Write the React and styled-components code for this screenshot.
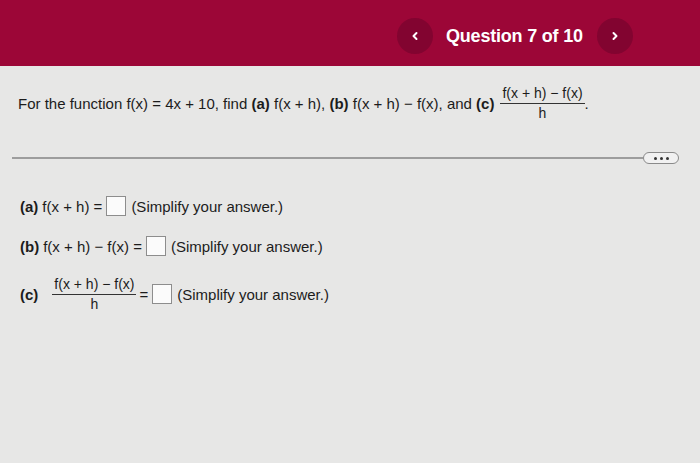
import React from "react";
import styled, { createGlobalStyle } from "styled-components";

const Global = createGlobalStyle`
  html, body { margin: 0; padding: 0; }
  body {
    background: #e7e7e6;
    font-family: "Liberation Sans", Arial, sans-serif;
    color: #1c1c1c;
    width: 700px;
    height: 463px;
    overflow: hidden;
  }
`;

const Header = styled.header`
  height: 66px;
  background: #9c0637;
  display: flex;
  align-items: center;
  padding: 6px 0 0 397px;
  box-sizing: border-box;
`;

const NavButton = styled.button`
  width: 36px;
  height: 36px;
  border-radius: 50%;
  border: none;
  background: #820430;
  color: #fff;
  display: flex;
  align-items: center;
  justify-content: center;
  padding: 0;
  flex: none;
`;

const HeaderTitle = styled.div`
  color: #fff;
  font-weight: bold;
  font-size: 18px;
  letter-spacing: -0.2px;
  margin: 0 14px 0 13px;
`;

const Statement = styled.div`
  padding: 17px 0 0 18px;
  font-size: 15px;
  height: 40px;
  display: flex;
  align-items: center;
  white-space: nowrap;
`;

const Fraction = styled.span`
  display: inline-flex;
  flex-direction: column;
  align-items: center;
  font-size: 14px;
  margin: 0 ${(p) => p.$gap}px 0 ${(p) => p.$lead}px;
`;

const Num = styled.span`
  padding: 0 2px 2px;
  border-bottom: 1px solid #333;
`;

const Den = styled.span`
  padding-top: 1px;
`;

const Bold = styled.b`
  font-weight: bold;
`;

const DividerRow = styled.div`
  display: flex;
  align-items: center;
  margin-top: 29px;
  padding-left: 12px;
`;

const Line = styled.div`
  flex: 1;
  height: 2px;
  background: #9d9d9d;
`;

const Pill = styled.div`
  width: 34px;
  height: 10px;
  border: 1.5px solid #8a8a8a;
  border-radius: 7px;
  background: #f1f1f1;
  display: flex;
  align-items: center;
  justify-content: center;
  gap: 3px;
  margin-right: 21px;
`;

const Dot = styled.span`
  width: 3px;
  height: 3px;
  border-radius: 50%;
  background: #333;
`;

const Parts = styled.div`
  padding: 29px 0 0 20px;
  display: flex;
  flex-direction: column;
  font-size: 15px;
`;

const PartRow = styled.div`
  display: flex;
  align-items: center;
  height: 26px;
  margin-bottom: ${(p) => p.$mb}px;
  white-space: nowrap;
`;

const Box = styled.span`
  display: inline-block;
  width: 18px;
  height: 18px;
  border: 1px solid #8d8d8d;
  background: #fbfbfb;
  margin: 0 5px 0 4px;
`;

const Label = styled.b`
  margin-right: ${(p) => p.$mr || 4}px;
`;

const Chevron = ({ dir }) => (
  <svg width="10" height="10" viewBox="0 0 10 10">
    <path
      d={dir === "left" ? "M6.5 2 L3.5 5 L6.5 8" : "M3.5 2 L6.5 5 L3.5 8"}
      fill="none"
      stroke="#fff"
      strokeWidth="2"
      strokeLinecap="round"
      strokeLinejoin="round"
    />
  </svg>
);

const Frac = ({ lead, gap }) => (
  <Fraction $lead={lead} $gap={gap}>
    <Num>f(x + h) − f(x)</Num>
    <Den>h</Den>
  </Fraction>
);

export default function App() {
  return (
    <>
      <Global />
      <Header>
        <NavButton aria-label="previous">
          <Chevron dir="left" />
        </NavButton>
        <HeaderTitle>Question 7 of 10</HeaderTitle>
        <NavButton aria-label="next">
          <Chevron dir="right" />
        </NavButton>
      </Header>
      <Statement>
        For the function f(x) = 4x + 10, find&nbsp;<Bold>(a)</Bold>&nbsp;f(x + h),&nbsp;
        <Bold>(b)</Bold>&nbsp;f(x + h) − f(x), and&nbsp;<Bold>(c)</Bold>
        <Frac lead={6} gap={0} />.
      </Statement>
      <DividerRow>
        <Line />
        <Pill>
          <Dot />
          <Dot />
          <Dot />
        </Pill>
      </DividerRow>
      <Parts>
        <PartRow $mb={14}>
          <Label>(a)</Label>f(x + h) =<Box />(Simplify your answer.)
        </PartRow>
        <PartRow $mb={22}>
          <Label>(b)</Label>f(x + h) − f(x) =<Box />(Simplify your answer.)
        </PartRow>
        <PartRow $mb={0}>
          <Label $mr={8}>(c)</Label>
          <Frac lead={6} gap={3} />=<Box />(Simplify your answer.)
        </PartRow>
      </Parts>
    </>
  );
}
